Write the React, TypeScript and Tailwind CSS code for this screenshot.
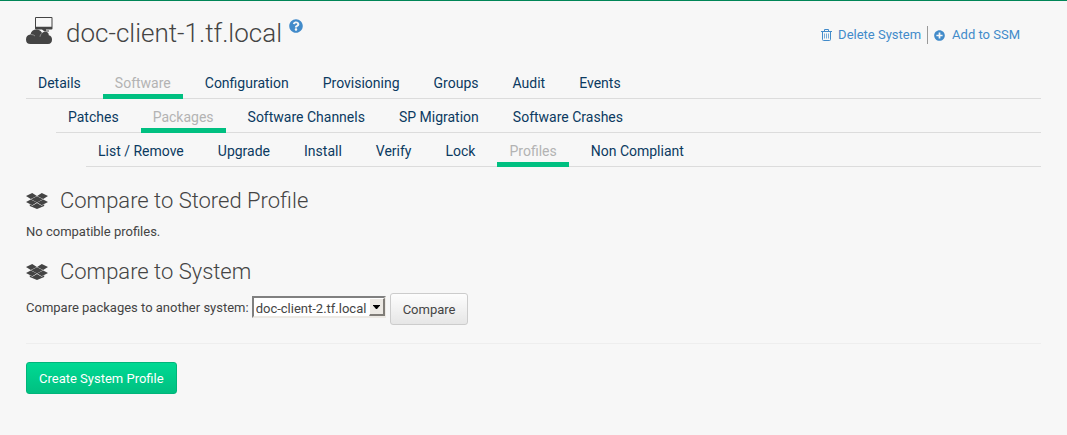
import { FaPlusCircle, FaQuestionCircle } from "react-icons/fa";

type TabRowProps = { label: string; tabs: string[]; active: string; indent: string };

function TabRow({ label, tabs, active, indent }: TabRowProps) {
  return (
    <nav aria-label={label} className={indent}>
      <ul className="flex gap-[10px] border-b border-[#dcdcdc]">
        {tabs.map((tab) => (
          <li key={tab} className="-mb-px">
            <a
              href="#"
              aria-current={tab === active ? "page" : undefined}
              className={
                tab === active
                  ? "block border-b-5 border-[#00c081] px-3 pt-2 pb-px text-sm text-[#b3b3b3]"
                  : "block border-b-5 border-transparent px-3 pt-2 pb-px text-sm text-[#0b3a61]"
              }
            >
              {tab}
            </a>
          </li>
        ))}
      </ul>
    </nav>
  );
}

function SystemIcon() {
  return (
    <svg aria-hidden="true" viewBox="0 0 28 28" className="mt-[2px] h-7 w-7 shrink-0 fill-[#444] stroke-none">
      <path fillRule="evenodd" d="M10 0h15.500q1 0 1 1v10.500q0 1-1 1H20v1h3v1h-4.500l-2.500-2h-6q-1 0-1-1V1q0-1 1-1zm0 1v8.700h15.500V1z" />
      <path d="M4.500 27Q0 27 0 22.500 0 18 4.500 17.500q1-5 6-5 4 0 5.500 3.500 1.500-1.300 3.500-1.300 3.300 0 3.300 3.500 3.200.8 3.200 4.400 0 4.400-4 4.400z" />
      <path fill="none" stroke="#bbb" strokeWidth=".6" d="M5 17.500q2.500 0 4 1.500M15.800 16.300q-1.800 1.500-1.800 3.500" />
    </svg>
  );
}

function PackageIcon() {
  return (
    <svg aria-hidden="true" viewBox="0 0 22 16" className="h-4 w-[22px] fill-[#444]">
      <path d="M6.200 0 10.900 3.100 4.800 6 0 3zM15.800 0 11.100 3.100 17.200 6 22 3z" />
      <path d="M11 3.200 17 6.200 11 9.400 5 6.200z" />
      <path d="M4.800 6.400 10.800 9.600 6.300 12.300 0 8.900zM17.200 6.400 11.200 9.600 15.700 12.300 22 8.900z" />
      <path d="M3.800 11.300 6.400 12.700 11 9.900 15.600 12.700 18.200 11.300V13L11 16 3.800 13z" />
    </svg>
  );
}

function TrashIcon() {
  return (
    <svg aria-hidden="true" viewBox="0 0 11 12" className="h-3 w-[11px] fill-none stroke-current">
      <path d="M0 2.500h11M3.500 2.500v-2h4v2M1.500 2.500v8q0 1 1 1h6q1 0 1-1v-8" />
      <path strokeOpacity=".7" d="M3.500 4.500v5M5.500 4.500v5M7.500 4.500v5" />
    </svg>
  );
}

function SectionTitle({ children }: { children: string }) {
  return (
    <h2 className="flex items-center gap-3 text-[22px] leading-7 font-light">
      <PackageIcon />
      {children}
    </h2>
  );
}

export default function App() {
  return (
    <div className="min-h-screen border-t border-[#008657] bg-[#f7f7f7] px-[26px] pb-10 font-['Roboto',sans-serif] text-[13px] leading-5 text-[#444]">
      <header className="flex items-start justify-between pt-[14px] pr-[21px]">
        <h1 className="flex items-start text-[26px] leading-9 font-light">
          <SystemIcon />
          <span className="ml-3">doc-client-1.tf.local</span>
          <a href="#" aria-label="Help" className="mt-1 ml-[7px] text-[#428bca]">
            <FaQuestionCircle className="h-[14px] w-[14px]" />
          </a>
        </h1>
        <div className="flex items-center pt-[10px] text-[#428bca]">
          <a href="#" className="flex items-center gap-[6px] pr-[6px]">
            <TrashIcon />
            Delete System
          </a>
          <span className="h-[18px] w-px bg-[#999]" />
          <a href="#" className="flex items-center gap-[7px] pl-[6px]">
            <FaPlusCircle aria-hidden="true" className="h-[11px] w-[11px]" />
            Add to SSM
          </a>
        </div>
      </header>

      <div className="mt-[14px]">
        <TabRow
          label="System"
          indent="ml-0"
          active="Software"
          tabs={["Details", "Software", "Configuration", "Provisioning", "Groups", "Audit", "Events"]}
        />
        <TabRow
          label="Software"
          indent="ml-[30px]"
          active="Packages"
          tabs={["Patches", "Packages", "Software Channels", "SP Migration", "Software Crashes"]}
        />
        <TabRow
          label="Packages"
          indent="ml-[60px]"
          active="Profiles"
          tabs={["List / Remove", "Upgrade", "Install", "Verify", "Lock", "Profiles", "Non Compliant"]}
        />
      </div>

      <main className="pt-5">
        <SectionTitle>Compare to Stored Profile</SectionTitle>
        <p className="mt-[7px]">No compatible profiles.</p>

        <div className="mt-4">
          <SectionTitle>Compare to System</SectionTitle>
        </div>
        <form className="mt-[7px] flex items-start" onSubmit={(event) => event.preventDefault()}>
          <label htmlFor="system" className="mt-[5px]">
            Compare packages to another system:
          </label>
          <div className="relative mt-[3px] ml-[3px]">
            <select
              id="system"
              className="block h-[22px] w-[134px] appearance-none border-2 border-t-[#808080] border-r-[#ece9e4] border-b-[#ece9e4] border-l-[#808080] bg-white pt-px pl-[2px] text-[13px]"
            >
              <option>doc-client-2.tf.local</option>
            </select>
            <span className="pointer-events-none absolute top-[2px] right-[1px] flex h-[18px] w-4 items-center justify-center border border-r-2 border-b-2 border-t-white border-r-[#807d78] border-b-[#807d78] border-l-white bg-[#ece9e4]">
              <svg aria-hidden="true" viewBox="0 0 7 4" className="h-1 w-[7px] fill-black">
                <path d="M0 0h7v.6L4 4H3L0 .6z" />
              </svg>
            </span>
          </div>
          <button
            type="submit"
            className="ml-1 h-8 rounded-[3px] border border-[#ccc] bg-linear-to-b from-[#fdfdfd] to-[#e6e6e6] px-3 pt-[2px]"
          >
            Compare
          </button>
        </form>

        <hr className="mt-[18px] border-[#eee]" />

        <button
          type="button"
          className="mt-[18px] h-8 rounded-[3px] border border-[#00b57a] bg-linear-to-b from-[#00d993] to-[#00c081] px-3 pt-[2px] text-white"
        >
          Create System Profile
        </button>
      </main>
    </div>
  );
}
